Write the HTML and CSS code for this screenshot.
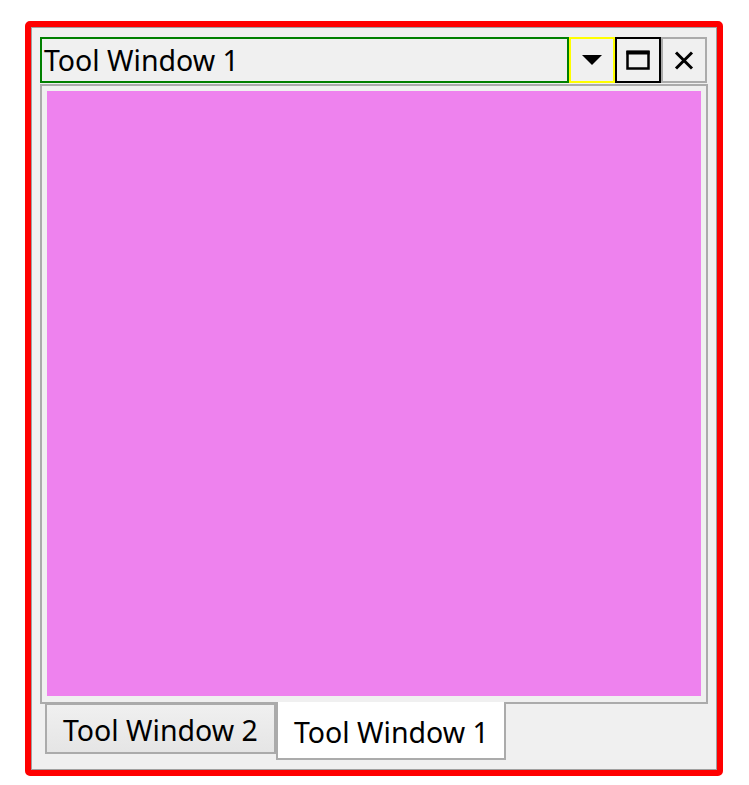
FILE: index.html
```html
<!DOCTYPE html>
<html>
<head>
<meta charset="utf-8">
<link rel="stylesheet" href="styles.css">
</head>
<body>
<div class="window">
  <div class="frame">
    <div class="titlebar">
      <div class="title">Tool Window 1</div>
      <div class="btn btn-menu">
        <svg width="22" height="12" viewBox="0 0 22 12"><path d="M1 1 H21 L11 11 Z" fill="#000"/></svg>
      </div>
      <div class="btn btn-max">
        <svg width="26" height="22" viewBox="0 0 26 22"><rect x="2.5" y="3" width="21" height="16.5" fill="none" stroke="#000" stroke-width="2.5"/><rect x="1.5" y="1.5" width="23" height="4" fill="#000"/></svg>
      </div>
      <div class="btn btn-close">
        <svg width="20" height="19" viewBox="0 0 20 19"><path d="M2 1.5 L18 17.5 M18 1.5 L2 17.5" stroke="#000" stroke-width="3"/></svg>
      </div>
    </div>
    <div class="panel">
      <div class="content"></div>
    </div>
    <div class="tabs">
      <div class="tab">Tool Window 2</div>
      <div class="tab active">Tool Window 1</div>
    </div>
  </div>
</div>
</body>
</html>
```
FILE: styles.css
```css
html, body {
  margin: 0;
  padding: 0;
  background: #ffffff;
}
body {
  padding: 21px 0 0 25px;
  font-family: "Noto Sans", "Open Sans", sans-serif;
}
.window {
  width: 698px;
  height: 755px;
  box-sizing: border-box;
  border: 6px solid #ff0000;
  border-radius: 5px;
  background: #ff0000;
}
.frame {
  box-sizing: border-box;
  height: 100%;
  border: 1px solid #a0a0a0;
  background: #f0f0f0;
  padding: 9px 7px 0 8px;
  display: flex;
  flex-direction: column;
}
.titlebar {
  display: flex;
  height: 46px;
}
.title {
  box-sizing: border-box;
  width: 529px;
  height: 46px;
  border: 2px solid #008000;
  font-size: 28.5px;
  line-height: 42px;
  padding-left: 2px;
  color: #000;
  white-space: nowrap;
}
.btn {
  box-sizing: border-box;
  width: 46px;
  height: 46px;
  border: 2px solid #ababab;
  display: flex;
  align-items: center;
  justify-content: center;
}
.btn-menu { border-color: #ffff00; }
.btn-max { border-color: #000000; }
.btn-close { border-color: #ababab; }
.panel {
  box-sizing: border-box;
  margin-top: 1px;
  width: 668px;
  height: 620px;
  border: 2px solid #ababab;
  padding: 5px 5px 6px 5px;
}
.content {
  width: 100%;
  height: 100%;
  background: #ee82ee;
}
.tabs {
  display: flex;
  align-items: flex-start;
  margin-top: -2px;
  padding-left: 5px;
}
.tab {
  box-sizing: border-box;
  height: 51px;
  width: 231px;
  margin-top: 1px;
  border: 2px solid #ababab;
  background: linear-gradient(#f0f0f0, #e5e5e5);
  font-size: 28.5px;
  line-height: 47px;
  padding-top: 2px;
  padding-left: 16px;
  white-space: nowrap;
  color: #000;
}
.tab.active {
  margin-top: 0;
  width: 230px;
  height: 58px;
  border-top: none;
  background: #ffffff;
  padding-top: 0;
  padding-left: 16px;
  line-height: 60px;
}
```
